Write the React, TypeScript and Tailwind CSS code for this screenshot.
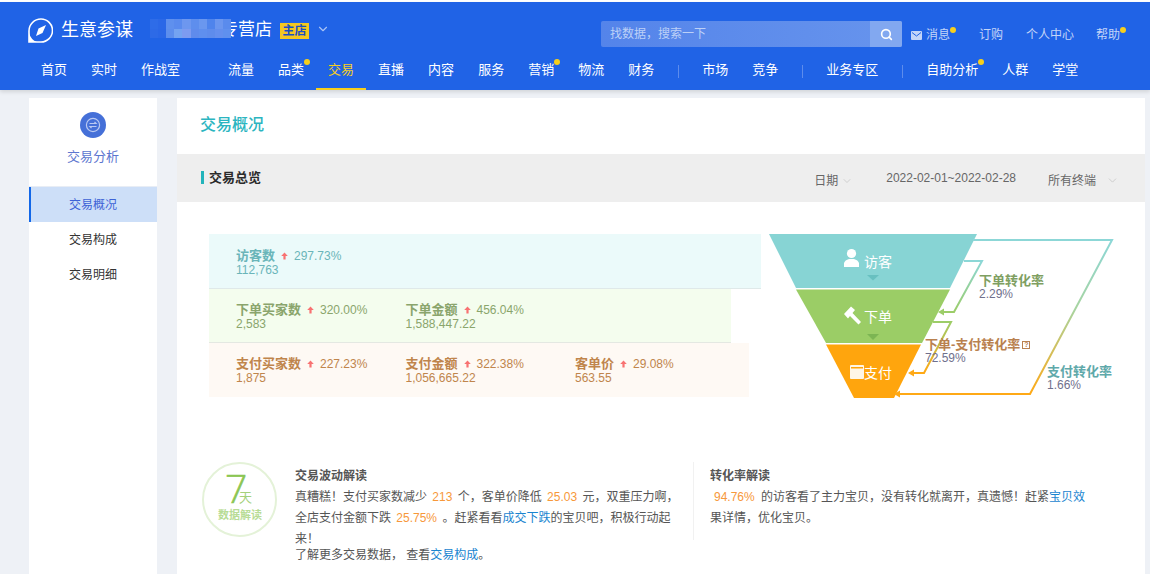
import React from 'react';
import { ChevronDown, Search } from 'lucide-react';

const Dot = () => <span className="absolute -right-[6px] -top-px w-[6px] h-[6px] rounded-full bg-[#f7cf1c]" />;

const UpArrow = () => (
  <svg width="7" height="8" viewBox="0 0 7 8" className="mx-[6px] shrink-0">
    <path d="M3.5 0.5 L6.8 4 L4.6 4 L4.6 7.5 L2.4 7.5 L2.4 4 L0.2 4 Z" fill="#f87272" />
  </svg>
);

const NavItem = ({ label, dot, active }: { label: string; dot?: boolean; active?: boolean }) => (
  <div className={`h-full px-3 flex items-center border-b-2 ${active ? 'border-[#f7cf1c] text-[#f7cf1c]' : 'border-transparent text-white'}`}>
    <span className="relative">
      {label}
      {dot && <Dot />}
    </span>
  </div>
);

const NavSep = () => (
  <div className="w-6 flex justify-center">
    <span className="w-px h-[13px] bg-[#5d8cec]" />
  </div>
);

const TopLink = ({ label, dot, className }: { label: string; dot?: boolean; className?: string }) => (
  <span className={`relative mt-[26px] leading-[14px] text-[12px] whitespace-nowrap text-[#c4d5f8] ${className ?? ''}`}>
    {label}
    {dot && <span className="absolute -right-[6px] -top-px w-[6px] h-[6px] rounded-full bg-[#f7cf1c]" />}
  </span>
);

const mosaic = [
  '#2e6ce8', '#2b68e7', '#5f90ee', '#5a8bee', '#6d97ef', '#5e8eed', '#6a97ef', '#4f84ec', '#6b96ef', '#5a8bed',
  '#2d6ae7', '#2a67e7', '#5d8eed', '#74a3f1', '#7d9bf0', '#5f8bec', '#5f8fee', '#5e8cec', '#648fee', '#5f90ee',
];

const Metric = ({ label, pct, value }: { label: string; pct: string; value: string }) => (
  <div className="w-[169.5px] leading-[14px]">
    <div className="flex items-center">
      <span className="font-bold text-[13px]">{label}</span>
      <UpArrow />
      <span>{pct}</span>
    </div>
    <div>{value}</div>
  </div>
);

const Funnel = () => (
  <div className="relative ml-2 w-[350px] h-[170px] shrink-0 text-[12px]">
    <svg width="350" height="170" viewBox="769 234 350 170" className="absolute inset-0">
      <defs>
        <linearGradient id="lineA" gradientUnits="userSpaceOnUse" x1="0" y1="240" x2="0" y2="394">
          <stop offset="0" stopColor="#8cd7d7" />
          <stop offset="0.45" stopColor="#a8d4a0" />
          <stop offset="1" stopColor="#ffa915" />
        </linearGradient>
        <linearGradient id="lineB" gradientUnits="userSpaceOnUse" x1="0" y1="261" x2="0" y2="312">
          <stop offset="0" stopColor="#8cd7d7" />
          <stop offset="1" stopColor="#9ccd68" />
        </linearGradient>
        <linearGradient id="lineC" gradientUnits="userSpaceOnUse" x1="0" y1="322" x2="0" y2="373">
          <stop offset="0" stopColor="#9ccd68" />
          <stop offset="1" stopColor="#ffa915" />
        </linearGradient>
      </defs>
      <polygon points="769,234 977,234 950,288 796,288" fill="#87d4d4" />
      <polygon points="796,289.5 950,289.5 922,343 826,343" fill="#9bcd66" />
      <polygon points="826,344.5 921,344.5 894,398 854,398" fill="#ffa50d" />
      <polygon points="867,275 879,275 873,280.5" fill="#68c0c0" />
      <polygon points="867,334 879,334 873,340" fill="#7cb553" />
      <polyline points="973,240 1112,240 1030,394 899,394" fill="none" stroke="url(#lineA)" strokeWidth="2" />
      <polygon points="894,394 900,390.5 900,397.5" fill="#ffa915" />
      <polyline points="964,261 982,261 954,312 942,312" fill="none" stroke="url(#lineB)" strokeWidth="2" />
      <polygon points="938,312 944,308.5 944,315.5" fill="#9ccd68" />
      <polyline points="933,322 951,322 924,373 912,373" fill="none" stroke="url(#lineC)" strokeWidth="2" />
      <polygon points="908,373 914,369.5 914,376.5" fill="#ffa915" />
      {/* user */}
      <circle cx="851.5" cy="253.5" r="4.6" fill="#fff" />
      <path d="M844 267 L844 263 Q845 260 849 259 L854 259 Q858 260 859 263 L859 267 Z" fill="#fff" />
      {/* hammer */}
      <path d="M844 314 L851 306.5 L855 310 L852.5 313 L861 322 L858.5 324.5 L850 316 L848 318.5 Z" fill="#fff" />
      {/* wallet */}
      <rect x="850" y="365" width="14" height="14" rx="1" fill="#fff" opacity="0.9" />
      <rect x="851" y="367" width="12" height="1.5" fill="#ffa50d" />
    </svg>
    <span className="absolute left-[95px] top-[19px] text-[14px] leading-[18px] text-white">访客</span>
    <span className="absolute left-[95px] top-[74px] text-[14px] leading-[18px] text-white">下单</span>
    <span className="absolute left-[95px] top-[130px] text-[14px] leading-[18px] text-white">支付</span>

    <div className="absolute left-[210px] top-[40px] leading-[13px]">
      <div className="text-[13px] leading-[14px] font-bold text-[#7f9f62]">下单转化率</div>
      <div className="text-[#70708c]">2.29%</div>
    </div>
    <div className="absolute left-[156px] top-[104px] leading-[13px]">
      <div className="flex items-center text-[13px] leading-[14px] font-bold text-[#b9814f] whitespace-nowrap">
        下单-支付转化率
        <span className="ml-[2px] w-2 h-2 border border-[#b9814f] text-[7px] leading-[6px] text-center">?</span>
      </div>
      <div className="text-[#70708c]">72.59%</div>
    </div>
    <div className="absolute left-[278px] top-[131px] leading-[13px]">
      <div className="text-[13px] leading-[14px] font-bold text-[#5fa9aa]">支付转化率</div>
      <div className="text-[#70708c]">1.66%</div>
    </div>
  </div>
);

export default function App() {
  return (
    <div className="w-[1150px] h-[574px] overflow-hidden bg-[#eef1f6] text-[12px] [font-family:'Liberation_Sans','Noto_Sans_CJK_SC',sans-serif]">
      <div className="h-[2px] bg-white" />

      {/* header */}
      <header className="h-[88px] bg-[#2063e6] shadow-[0_2px_4px_rgba(0,0,0,0.12)] relative">
        <div className="h-[50px] pl-7 flex items-start">
          <svg width="25" height="25" viewBox="0 0 25 25" className="mt-4 shrink-0">
            <path d="M13 1 A11.5 11.5 0 1 1 13 24 L1 24 L1 13 A12 12 0 0 1 13 1 Z" fill="none" stroke="#fff" strokeWidth="1.6" />
            <path d="M1 24 L1 15 Q3 22 9 24 Z" fill="#fff" />
            <path d="M18 7 L14.5 15 L8 18 L10.5 10.5 Z" fill="#fff" />
          </svg>
          <span className="mt-4 ml-2 text-[18px] leading-6 text-white whitespace-nowrap">生意参谋</span>
          <div className="relative mt-4 ml-[17px] w-[122px] h-6 shrink-0">
            <span className="absolute left-[71px] top-0 text-[17px] leading-6 text-white whitespace-nowrap">专营店</span>
            <div className="absolute left-0 top-px w-[81px] h-[19px] grid grid-cols-10 grid-rows-2">
              {mosaic.map((c, i) => (
                <span key={i} style={{ backgroundColor: c }} />
              ))}
            </div>
          </div>
          <span className="mt-[21px] ml-2 w-[29px] h-4 bg-[#f5c81f] text-[#1c4fc0] font-bold text-[12px] leading-4 text-center shrink-0">主店</span>
          <ChevronDown className="mt-5 ml-[7px] w-[14px] h-[14px] text-[#a9c3f5] shrink-0" />
          <div className="mt-[19px] ml-[271px] w-[301px] h-[26px] flex rounded-[2px] bg-gradient-to-r from-[#5484ea] to-[#6794ed] shrink-0">
            <span className="flex-1 pl-[9px] text-[12px] leading-[26px] text-[#bcd0f7]">找数据，搜索一下</span>
            <span className="w-8 bg-[#82a8f0] rounded-r-[2px] flex items-center justify-center">
              <Search className="w-[13px] h-[13px] text-white" strokeWidth={3} />
            </span>
          </div>
          <svg width="11" height="9" viewBox="0 0 11 9" className="mt-[29px] ml-[9px] shrink-0">
            <rect width="11" height="9" rx="1" fill="#c4d5f8" />
            <path d="M1 1.5 L5.5 5 L10 1.5" fill="none" stroke="#2063e6" strokeWidth="1" />
          </svg>
          <TopLink label="消息" dot className="ml-1" />
          <TopLink label="订购" className="ml-[29px]" />
          <TopLink label="个人中心" className="ml-[23px]" />
          <TopLink label="帮助" dot className="ml-[22px]" />
        </div>
        <nav className="h-[38px] pl-[29px] flex items-center text-[13px] whitespace-nowrap">
          <NavItem label="首页" />
          <NavItem label="实时" />
          <NavItem label="作战室" />
          <div className="w-6" />
          <NavItem label="流量" />
          <NavItem label="品类" dot />
          <NavItem label="交易" active />
          <NavItem label="直播" />
          <NavItem label="内容" />
          <NavItem label="服务" />
          <NavItem label="营销" dot />
          <NavItem label="物流" />
          <NavItem label="财务" />
          <NavSep />
          <NavItem label="市场" />
          <NavItem label="竞争" />
          <NavSep />
          <NavItem label="业务专区" />
          <NavSep />
          <NavItem label="自助分析" dot />
          <NavItem label="人群" />
          <NavItem label="学堂" />
        </nav>
      </header>

      <div className="flex pl-[29px] pt-2 gap-5">
        {/* sidebar */}
        <aside className="w-[128px] h-[500px] bg-white shrink-0">
          <div className="h-[89px] flex flex-col items-center pt-[14px] border-b border-[#e8edf5]">
            <span className="w-[26px] h-[26px] rounded-full bg-[#4570d8] flex items-center justify-center">
              <svg width="16" height="16" viewBox="0 0 16 16" fill="none" stroke="#b9c9f2" strokeWidth="1.2">
                <circle cx="8" cy="8" r="6.6" />
                <path d="M4.5 6.5 H11 L9.5 5 M11.5 9.5 H5 L6.5 11" />
              </svg>
            </span>
            <span className="mt-[10px] text-[13px] leading-[18px] text-[#5d76cf]">交易分析</span>
          </div>
          <div className="h-[35px] bg-[#cddff8] border-l-2 border-[#1267e8] flex items-center justify-center pr-[2px] text-[#3e63d6]">交易概况</div>
          <div className="h-[35px] flex items-center justify-center text-[#333]">交易构成</div>
          <div className="h-[35px] flex items-center justify-center text-[#333]">交易明细</div>
        </aside>

        {/* main */}
        <main className="w-[968px] h-[500px] bg-white shrink-0">
          <div className="h-[56px] pl-[23px] pb-[2px] flex items-center text-[16px] font-medium text-[#2bb5c0]">交易概况</div>
          <div className="h-[48px] bg-[#eeeeee] pl-6 flex items-start relative">
            <span className="mt-[17px] w-[3px] h-[13px] bg-[#23b4bb]" />
            <span className="mt-4 ml-[5px] font-bold text-[13px] leading-[16px] text-[#2b2b2b]">交易总览</span>
            <div className="ml-auto flex items-start text-[#666] whitespace-nowrap">
              <span className="mt-5 leading-[14px]">日期</span>
              <ChevronDown className="mt-[21px] ml-[3px] w-[12px] h-[12px] text-[#bbbbbb]" strokeWidth={1.2} />
              <span className="mt-[17px] ml-[33px] leading-[14px]">2022-02-01~2022-02-28</span>
              <span className="mt-5 ml-8 leading-[14px]">所有终端</span>
              <ChevronDown className="mt-[20px] ml-[10px] mr-[26px] w-[13px] h-[13px] text-[#bbbbbb]" strokeWidth={1.2} />
            </div>
          </div>

          <div className="pl-8 pt-8 flex">
            <div className="w-[552px] shrink-0">
              <div className="h-[55px] bg-[#ebfafa] border-b border-[#dfe9e9] pl-[27px] pt-[15px] flex text-[#6ab5b9]">
                <Metric label="访客数" pct="297.73%" value="112,763" />
              </div>
              <div className="h-[54px] w-[522px] bg-[#f4fdee] border-b border-[#e4e8e2] pl-[27px] pt-[14px] flex text-[#8aa56c]">
                <Metric label="下单买家数" pct="320.00%" value="2,583" />
                <Metric label="下单金额" pct="456.04%" value="1,588,447.22" />
              </div>
              <div className="h-[54px] w-[540px] bg-[#fef9f4] pl-[27px] pt-[14px] flex text-[#c0854c]">
                <Metric label="支付买家数" pct="227.23%" value="1,875" />
                <Metric label="支付金额" pct="322.38%" value="1,056,665.22" />
                <Metric label="客单价" pct="29.08%" value="563.55" />
              </div>
            </div>
            <Funnel />
          </div>

          <div className="pl-[25px] pt-[58px] flex items-start">
            <div className="w-[75px] h-[75px] rounded-full border-2 border-[#e4f2d8] shrink-0 relative">
              <span className="absolute left-[21px] top-0 text-[39px] leading-[48px] font-light text-[#8cc653] [-webkit-text-stroke:0.6px_#8cc653] [font-family:'Open_Sans',sans-serif]">7</span>
              <span className="absolute left-[35px] top-[25px] text-[13px] leading-[18px] text-[#a5d17b]">天</span>
              <span className="absolute left-[14px] top-[44px] text-[11px] leading-[14px] font-bold text-[#b8dc96] whitespace-nowrap">数据解读</span>
            </div>
            <div className="mt-1 ml-[18px] w-[384px] shrink-0 text-[#555]">
              <div className="font-bold mb-px leading-[20px]">交易波动解读</div>
              <div className="leading-[21px]">
                真糟糕！支付买家数减少 <span className="text-[#f7983a] mx-[2px]">213</span> 个，客单价降低 <span className="text-[#f7983a] mx-[2px]">25.03</span> 元，双重压力啊，全店支付金额下跌 <span className="text-[#f7983a] mx-[2px]">25.75%</span> 。赶紧看看<span className="text-[#1a85d0]">成交下跌</span>的宝贝吧，积极行动起来！
              </div>
              <div className="-mt-1 leading-[18px]">了解更多交易数据， 查看<span className="text-[#1a85d0]">交易构成</span>。</div>
            </div>
            <div className="ml-[14px] w-[396px] h-[78px] border-l border-[#f1f1f1] pl-4 pt-1 text-[#555]">
              <div className="font-bold mb-px leading-[20px]">转化率解读</div>
              <div className="leading-[21px]">
                <span className="text-[#f7983a] ml-[4px] mr-[3px]">94.76%</span> 的访客看了主力宝贝，没有转化就离开，真遗憾！赶紧<span className="text-[#1a85d0]">宝贝效</span>果详情，优化宝贝。
              </div>
            </div>
          </div>
        </main>
      </div>
    </div>
  );
}
